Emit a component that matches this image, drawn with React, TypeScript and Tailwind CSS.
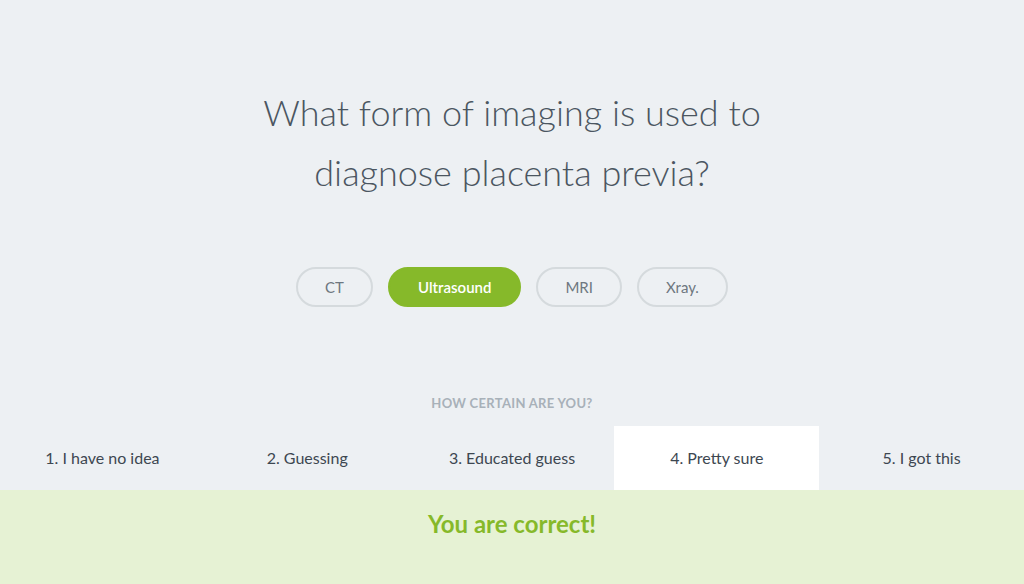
const answers = ["CT", "Ultrasound", "MRI", "Xray."];
const levels = [
  "1. I have no idea",
  "2. Guessing",
  "3. Educated guess",
  "4. Pretty sure",
  "5. I got this",
];

export default function App() {
  const picked = "Ultrasound";
  const certainty = 3;

  return (
    <div
      className="w-[1024px] h-[584px] overflow-hidden bg-[#edf0f3] flex flex-col"
      style={{ fontFamily: "Lato, 'Open Sans', sans-serif" }}
    >
      {/* question */}
      <h1 className="pt-[82px] text-center text-[36px] leading-[60px] font-light text-[#4b5661]">
        What form of imaging is used to
        <br />
        diagnose placenta previa?
      </h1>

      {/* answer pills */}
      <div className="mt-[65px] flex justify-center gap-[15px]">
        {answers.map((a) => (
          <button
            key={a}
            className={
              a === picked
                ? "h-10 px-[28px] rounded-full border-2 border-[#86b92a] bg-[#86b92a] text-white text-[15px] font-semibold"
                : "h-10 px-[27px] rounded-full border-2 border-[#d5dadd] text-[#6d7780] text-[15px]"
            }
          >
            {a}
          </button>
        ))}
      </div>

      {/* certainty */}
      <p className="mt-[87px] text-center text-[13px] font-bold tracking-[0.3px] text-[#a8b1b9]">
        HOW CERTAIN ARE YOU?
      </p>
      <div className="mt-[12px] grid grid-cols-5 h-16">
        {levels.map((l, i) => (
          <div
            key={l}
            className={
              "flex items-center justify-center text-[16px] text-[#3d4751] " +
              (i === certainty ? "bg-white" : "")
            }
          >
            {l}
          </div>
        ))}
      </div>

      {/* result */}
      <div className="flex-1 bg-[#e6f2d4] pt-[16px] text-center">
        <span className="text-[24px] font-bold text-[#86b92a]">You are correct!</span>
      </div>
    </div>
  );
}
